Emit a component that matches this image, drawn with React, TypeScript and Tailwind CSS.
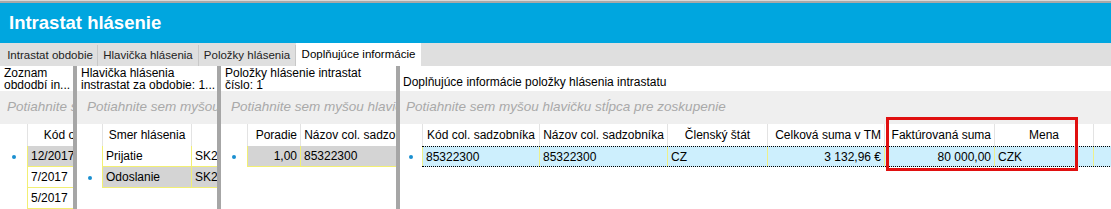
import React from "react";

const font = { fontFamily: '"Liberation Sans", Arial, sans-serif' };

type Col = { title: string; w: number; align?: "left" | "right" | "center"; hAlign?: "left" | "right" | "center" };

const Dot = () => <span className="block w-[4px] h-[4px] rounded-full bg-[#1a8fd0]" />;

const alignCls = (a?: string) =>
  a === "right" ? "justify-end text-right" : a === "center" ? "justify-center text-center" : "justify-start text-left";

function Splitter() {
  return <div className="w-[4px] shrink-0 bg-[#a6a6a6]" />;
}

function GroupBar({ text = "Potiahnite sem myšou hlavičku stĺpca pre zoskupenie", pad = 8 }: { text?: string; pad?: number }) {
  return (
    <div style={{ paddingLeft: pad }} className="h-[33px] shrink-0 bg-[#efefef] flex items-center overflow-hidden whitespace-nowrap">
      <span className="block min-w-0 italic text-[13.5px] text-[#a9a9a9] overflow-hidden">{text}</span>
    </div>
  );
}

function HeaderRow({ indW, cols }: { indW: number; cols: Col[] }) {
  return (
    <div className="h-[22px] flex shrink-0 bg-white">
      <div style={{ width: indW }} className="shrink-0" />
      {cols.map((c, i) => (
        <div
          key={i}
          style={{ width: c.w }}
          className={`shrink-0 flex items-center border-l border-[#e3e3e3] px-[3px] overflow-hidden whitespace-nowrap text-[12px] ${alignCls(c.hAlign ?? "center")}`}
        >
          {c.title}
        </div>
      ))}
    </div>
  );
}

type Row = { cells: string[]; selected?: boolean; dot?: boolean };

function DataRows({ indW, cols, rows }: { indW: number; cols: Col[]; rows: Row[] }) {
  return (
    <div className="flex flex-col">
      {rows.map((r, ri) => (
        <div key={ri} className="h-[21px] flex shrink-0">
          <div style={{ width: indW }} className="shrink-0 flex items-center justify-center">
            {r.dot && <Dot />}
          </div>
          {r.cells.map((c, ci) => (
            <div
              key={ci}
              style={{ width: cols[ci].w }}
              className={`shrink-0 flex items-center px-[3px] overflow-hidden whitespace-nowrap text-[12px] border-l border-b border-[#f2ef74] ${alignCls(cols[ci].align)} ${r.selected ? "bg-[#d4d4d4]" : "bg-white"}`}
            >
              {c}
            </div>
          ))}
        </div>
      ))}
    </div>
  );
}

function Panel({
  width,
  title,
  indW,
  cols,
  rows,
  pad,
}: {
  width: number;
  title: React.ReactNode;
  indW: number;
  cols: Col[];
  rows: Row[];
  pad?: number;
}) {
  return (
    <div style={{ width }} className="shrink-0 flex flex-col overflow-hidden bg-white">
      <div className="h-[25px] shrink-0 px-[4px] text-[12px] leading-[12px] pt-[1px] overflow-hidden whitespace-nowrap">
        {title}
      </div>
      <GroupBar pad={pad} />
      <HeaderRow indW={indW} cols={cols} />
      <DataRows indW={indW} cols={cols} rows={rows} />
    </div>
  );
}

const mainCols: Col[] = [
  { title: "Kód col. sadzobníka", w: 117, align: "left" },
  { title: "Názov col. sadzobníka", w: 128, align: "left" },
  { title: "Členský štát", w: 100, align: "left" },
  { title: "Celková suma v TM", w: 117, align: "right", hAlign: "right" },
  { title: "Faktúrovaná suma", w: 110, align: "right", hAlign: "right" },
  { title: "Mena", w: 99, align: "left" },
  { title: "", w: 40, align: "left" },
];

function MainPanel() {
  return (
    <div className="flex-1 flex flex-col overflow-hidden bg-white relative">
      <div className="h-[25px] shrink-0 px-[3px] text-[12px] flex items-center pt-[6px] whitespace-nowrap">
        Doplňujúce informácie položky hlásenia intrastatu
      </div>
      <GroupBar pad={6} />
      <HeaderRow indW={22} cols={mainCols} />
      <div className="h-[21px] flex shrink-0">
        <div className="w-[22px] shrink-0 flex items-center justify-center">
          <Dot />
        </div>
        <div className="flex-1 flex border-y border-dotted border-black bg-[#cdeffd]">
          {["85322300", "85322300", "CZ", "3 132,96 €", "80 000,00", "CZK", ""].map((c, i) => (
            <div
              key={i}
              style={{ width: mainCols[i].w }}
              className={`shrink-0 flex items-center px-[3px] whitespace-nowrap text-[12px] border-l border-[#eef08a] ${alignCls(mainCols[i].align)}`}
            >
              {c}
            </div>
          ))}
          <div className="flex-1 border-l border-[#eef08a]" />
        </div>
      </div>
      <div className="absolute left-[486px] top-[51px] w-[192px] h-[54px] border-[3px] border-[#e01010]" />
    </div>
  );
}

export default function App() {
  const tabs = [
    { t: "Intrastat obdobie", w: 95 },
    { t: "Hlavička hlásenia", w: 101 },
    { t: "Položky hlásenia", w: 97 },
  ];
  return (
    <div style={font} className="w-[1111px] h-[209px] bg-white text-black overflow-hidden flex flex-col">
      <div className="h-[1px] bg-[#d8d8d8]" />
      <div className="h-[2px] bg-[#a8a8a8]" />
      <div className="h-[40px] bg-[#00a6df] flex items-center pl-[9px]">
        <span className="text-white font-bold text-[18.5px]">Intrastat hlásenie</span>
      </div>
      <div className="h-[23px] bg-[#dfdfdf] flex items-end pl-[3px]">
        {tabs.map((t) => (
          <div
            key={t.t}
            style={{ width: t.w }}
            className="h-[21px] shrink-0 flex items-center justify-center border-r border-[#c8c8c8] text-[11.5px] text-[#222] whitespace-nowrap"
          >
            {t.t}
          </div>
        ))}
        <div className="h-[23px] w-[125px] shrink-0 flex items-center justify-center bg-white text-[11.5px] whitespace-nowrap">
          Doplňujúce informácie
        </div>
      </div>
      <div className="flex-1 flex">
        <Panel
          width={73}
          indW={27}
          pad={7}
          title={
            <>
              Zoznam
              <br />
              obdodbí in...
            </>
          }
          cols={[{ title: "Kód obdobia", w: 100, align: "left" }]}
          rows={[
            { cells: ["12/2017"], selected: true, dot: true },
            { cells: ["7/2017"] },
            { cells: ["5/2017"] },
          ]}
        />
        <Splitter />
        <Panel
          width={140}
          indW={25}
          pad={10}
          title={
            <>
              Hlavička hlásenia
              <br />
              instrastat za obdobie: 1...
            </>
          }
          cols={[
            { title: "Smer hlásenia", w: 89, align: "left" },
            { title: "Číslo hlásenia", w: 160, align: "left" },
          ]}
          rows={[
            { cells: ["Prijatie", "SK2017"] },
            { cells: ["Odoslanie", "SK2017"], selected: true, dot: true },
          ]}
        />
        <Splitter />
        <Panel
          width={175}
          indW={26}
          pad={10}
          title={
            <>
              Položky hlásenie intrastat
              <br />
              číslo: 1
            </>
          }
          cols={[
            { title: "Poradie", w: 53, align: "right", hAlign: "right" },
            { title: "Názov col. sadzobníka", w: 128, align: "left" },
          ]}
          rows={[{ cells: ["1,00", "85322300"], selected: true, dot: true }]}
        />
        <Splitter />
        <MainPanel />
      </div>
    </div>
  );
}
